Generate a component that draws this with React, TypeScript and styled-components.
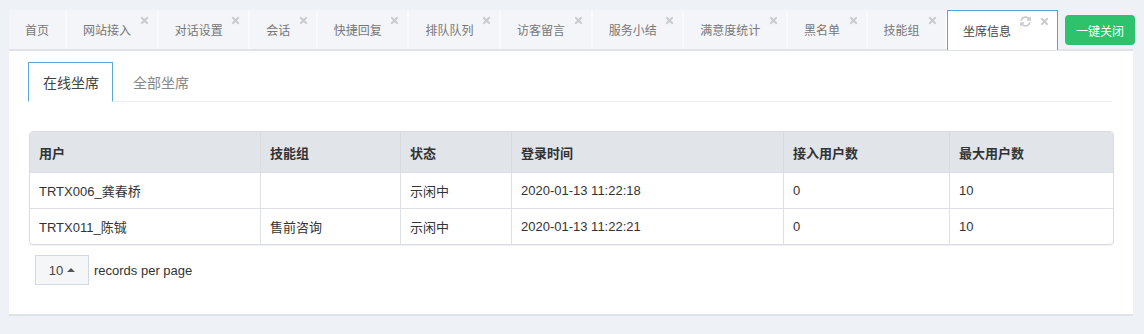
import React from 'react';
import styled, { createGlobalStyle } from 'styled-components';
import { FaTimes, FaSyncAlt } from 'react-icons/fa';

const GlobalStyle = createGlobalStyle`
    body {
        margin: 0;
        background: #eef1f5;
        font-family: "Liberation Sans", Arial, "Noto Sans CJK SC", sans-serif;
        color: #333;
    }
`

interface TabItem {
    label: string;
    closable: boolean;
}

const tabs: TabItem[] = [
    { label: '首页', closable: false },
    { label: '网站接入', closable: true },
    { label: '对话设置', closable: true },
    { label: '会话', closable: true },
    { label: '快捷回复', closable: true },
    { label: '排队队列', closable: true },
    { label: '访客留言', closable: true },
    { label: '服务小结', closable: true },
    { label: '满意度统计', closable: true },
    { label: '黑名单', closable: true },
    { label: '技能组', closable: true },
];

const columns = [
    { title: '用户', width: 230 },
    { title: '技能组', width: 140 },
    { title: '状态', width: 111 },
    { title: '登录时间', width: 272 },
    { title: '接入用户数', width: 166 },
    { title: '最大用户数', width: 164 },
];

const rows = [
    ['TRTX006_龚春桥', '', '示闲中', '2020-01-13 11:22:18', '0', '10'],
    ['TRTX011_陈铖', '售前咨询', '示闲中', '2020-01-13 11:22:21', '0', '10'],
];

const App = () => {
    return (
        <Page>
            <GlobalStyle />
            <TopRow>
                <TabBar>
                    {tabs.map((t) => (
                        <Tab key={t.label} $closable={t.closable}>
                            {t.label}
                            {t.closable && (
                                <CloseIcon>
                                    <FaTimes />
                                </CloseIcon>
                            )}
                        </Tab>
                    ))}
                    <ActiveTab>
                        坐席信息
                        <RefreshIcon>
                            <FaSyncAlt />
                        </RefreshIcon>
                        <CloseIcon>
                            <FaTimes />
                        </CloseIcon>
                    </ActiveTab>
                </TabBar>
                <CloseAllButton>一键关闭</CloseAllButton>
            </TopRow>
            <Panel>
                <SubTabs>
                    <SubTab $active>在线坐席</SubTab>
                    <SubTab>全部坐席</SubTab>
                </SubTabs>
                <Table>
                    <colgroup>
                        {columns.map((c) => (
                            <col key={c.title} style={{ width: c.width }} />
                        ))}
                    </colgroup>
                    <thead>
                        <tr>
                            {columns.map((c) => (
                                <HeadCell key={c.title}>{c.title}</HeadCell>
                            ))}
                        </tr>
                    </thead>
                    <tbody>
                        {rows.map((r, i) => (
                            <tr key={i}>
                                {r.map((v, j) => (
                                    <Cell key={j}>{v}</Cell>
                                ))}
                            </tr>
                        ))}
                    </tbody>
                </Table>
                <Pager>
                    <PageSize>
                        10
                        <Caret />
                    </PageSize>
                    <PagerText>records per page</PagerText>
                </Pager>
            </Panel>
        </Page>
    )
}

export default App;

const Page = styled.div`
    padding: 10px 11px 19px 9px;
`
const TopRow = styled.div`
    display: flex;
    align-items: flex-start;
`
const TabBar = styled.div`
    display: flex;
    height: 39px;
    flex-shrink: 0;
`
const Tab = styled.div<{ $closable?: boolean }>`
    position: relative;
    display: flex;
    align-items: center;
    flex-shrink: 0;
    height: 100%;
    padding: 0 ${(p) => (p.$closable ? '25.6px' : '16px')} 0 16px;
    background: #f3f5f8;
    border-right: 2px solid #f9fafc;
    font-size: 12px;
    color: #777;
    white-space: nowrap;
`
const ActiveTab = styled(Tab)`
    padding: 0 46px 0 15px;
    background: #fff;
    border: 1px solid #56a6da;
    border-bottom: none;
    color: #444;
`
const CloseIcon = styled.span`
    position: absolute;
    top: 5px;
    right: 7px;
    font-size: 11px;
    color: #c9cbce;
    line-height: 0;
`
const RefreshIcon = styled.span`
    position: absolute;
    top: 5px;
    right: 26px;
    font-size: 11px;
    color: #c9cbce;
    line-height: 0;
`
const CloseAllButton = styled.button`
    flex-shrink: 0;
    margin: 5px 0 0 7px;
    width: 70px;
    height: 30px;
    border: none;
    border-radius: 4px;
    background: #2ec26d;
    color: #fff;
    font-family: inherit;
    font-size: 12px;
    padding: 0;
`
const Panel = styled.div`
    background: #fff;
    border-top: 2px solid #dfe3e8;
    border-bottom: 2px solid #dfe3e8;
    padding: 11px 21px 29px 19px;
`
const SubTabs = styled.div`
    display: flex;
    gap: 5px;
    border-bottom: 1px solid #eceef1;
    height: 39px;
`
const SubTab = styled.div<{ $active?: boolean }>`
    display: flex;
    align-items: center;
    padding: 0 13px 0 14px;
    margin-bottom: -1px;
    font-size: 14px;
    color: ${(p) => (p.$active ? '#444' : '#888')};
    background: ${(p) => (p.$active ? '#fff' : 'transparent')};
    border: 1px solid ${(p) => (p.$active ? '#5aa7d9' : 'transparent')};
    border-bottom: 1px solid ${(p) => (p.$active ? '#fff' : 'transparent')};
`
const Table = styled.table`
    margin: 29px 0 0 1px;
    width: 1083px;
    table-layout: fixed;
    border-collapse: separate;
    border-spacing: 0;
    border: 1px solid #d8dce1;
    border-radius: 4px;
    overflow: hidden;
    font-size: 13px;
    box-shadow: 0 1px 1px rgba(0, 0, 0, 0.06);
`
const HeadCell = styled.th`
    height: 40px;
    padding: 0 9px;
    text-align: left;
    font-weight: bold;
    color: #333;
    background: #e1e5ea;
    border-left: 1px solid #d8dce1;
    &:first-child {
        border-left: none;
    }
`
const Cell = styled.td`
    height: 35px;
    padding: 0 9px;
    color: #333;
    border-top: 1px solid #dcdfe3;
    border-left: 1px solid #dcdfe3;
    &:first-child {
        border-left: none;
    }
`
const Pager = styled.div`
    display: flex;
    align-items: center;
    margin: 10px 0 0 7px;
    gap: 5px;
`
const PageSize = styled.div`
    display: flex;
    align-items: center;
    justify-content: center;
    gap: 4px;
    width: 52px;
    height: 28px;
    background: #f5f6f8;
    border: 1px solid #d3d8de;
    font-size: 13px;
    color: #444;
`
const Caret = styled.span`
    width: 0;
    height: 0;
    border-left: 4px solid transparent;
    border-right: 4px solid transparent;
    border-bottom: 4px solid #555;
`
const PagerText = styled.span`
    font-size: 13px;
    color: #333;
`
